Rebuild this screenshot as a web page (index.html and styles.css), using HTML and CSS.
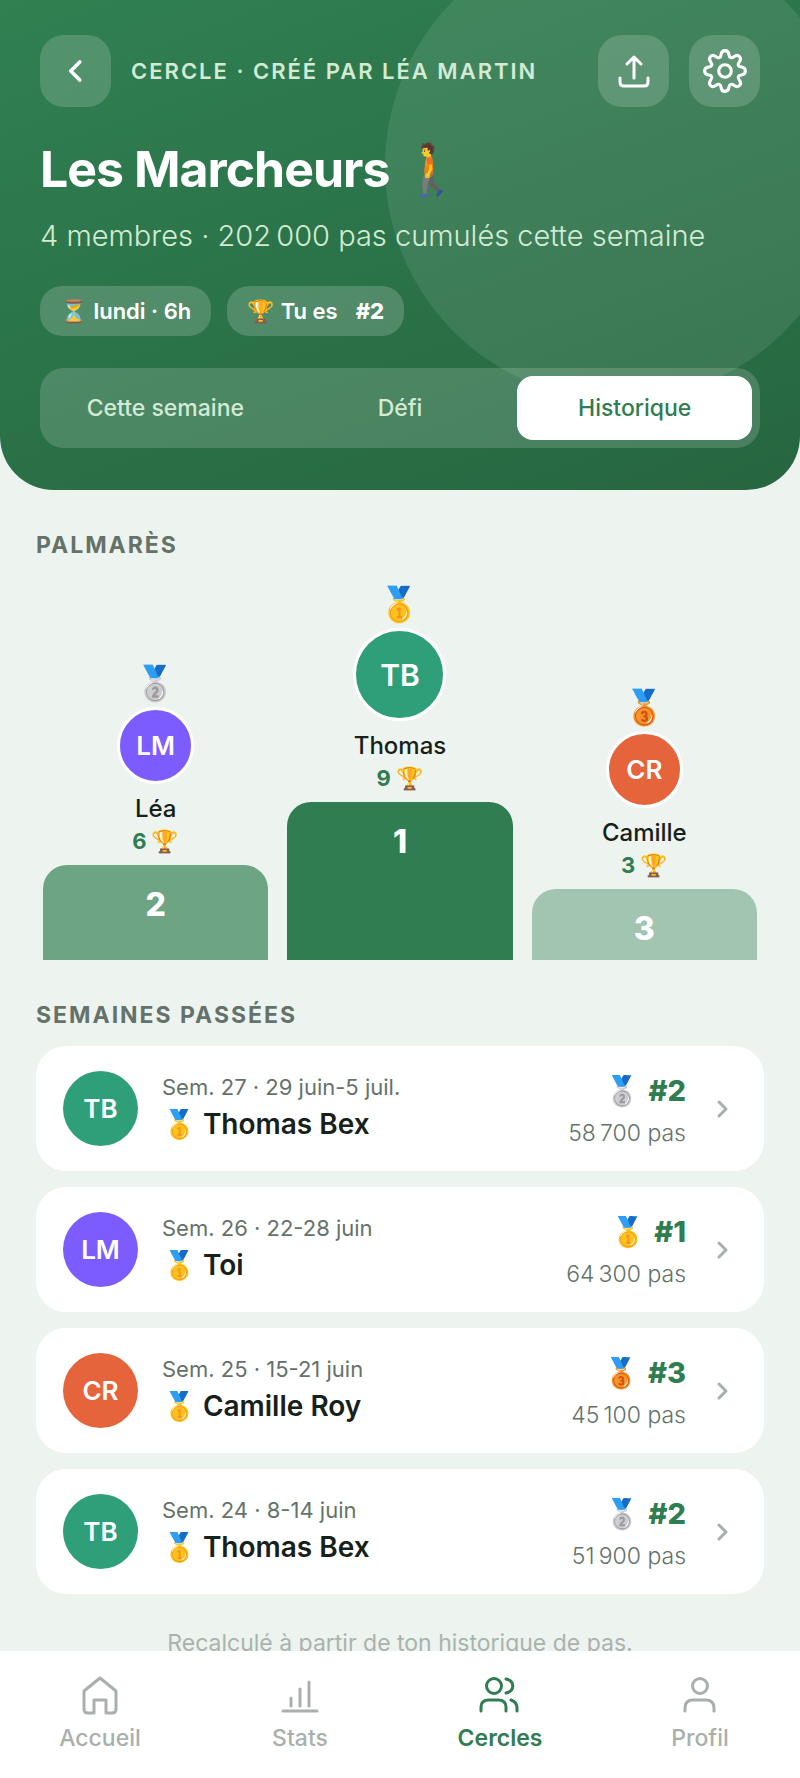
FILE: index.html
```
<!DOCTYPE html>
<html lang="fr">
<head>
    <meta charset="UTF-8">
    <meta name="viewport" content="width=device-width, initial-scale=1.0">
    <title>Les Marcheurs - Historique</title>
    <link rel="stylesheet" href="styles.css">
</head>
<body>
<div class="app">

    <!-- En-tête -->
    <header class="hero">
        <div class="topbar">
            <button class="icon-btn" aria-label="Retour">
                <svg width="36" height="36" viewBox="0 0 24 24"><path d="M14.5 6 L8.5 12 L14.5 18" stroke-width="2.4"/></svg>
            </button>
            <span class="overline">CERCLE · CRÉÉ PAR LÉA MARTIN</span>
            <button class="icon-btn" aria-label="Partager">
                <svg width="40" height="40" viewBox="0 0 40 40" stroke-width="3"><path d="M20 27 V7 M13 13 L20 6 L27 13 M6 27 V31 Q6 35 10 35 H30 Q34 35 34 31 V27"/></svg>
            </button>
            <button class="icon-btn" aria-label="Réglages">
                <svg width="46" height="46" viewBox="0 0 44 44" stroke-width="3"><circle cx="22" cy="22" r="6"/><path d="M18.2 6.5 C18.8 1.2 25.2 1.2 25.8 6.5 C26.1 9.4 28.2 10.2 30.5 8.4 C34.8 5.2 38.8 9.2 35.6 13.5 C33.8 15.8 34.6 17.9 37.5 18.2 C42.8 18.8 42.8 25.2 37.5 25.8 C34.6 26.1 33.8 28.2 35.6 30.5 C38.8 34.8 34.8 38.8 30.5 35.6 C28.2 33.8 26.1 34.6 25.8 37.5 C25.2 42.8 18.8 42.8 18.2 37.5 C17.9 34.6 15.8 33.8 13.5 35.6 C9.2 38.8 5.2 34.8 8.4 30.5 C10.2 28.2 9.4 26.1 6.5 25.8 C1.2 25.2 1.2 18.8 6.5 18.2 C9.4 17.9 10.2 15.8 8.4 13.5 C5.2 9.2 9.2 5.2 13.5 8.4 C15.8 10.2 17.9 9.4 18.2 6.5 Z"/></svg>
            </button>
        </div>

        <h1>Les Marcheurs <span class="walker">🚶</span></h1>
        <p class="subtitle">4 membres · 202&#8239;000 pas cumulés cette semaine</p>

        <div class="chips">
            <span class="chip"><span class="emoji">⏳</span>lundi · 6h</span>
            <span class="chip"><span class="emoji">🏆</span>Tu es <b>#2</b></span>
        </div>

        <div class="tabs">
            <button class="tab">Cette semaine</button>
            <button class="tab">Défi</button>
            <button class="tab active">Historique</button>
        </div>
    </header>

    <main>
        <!-- Podium -->
        <h2>PALMARÈS</h2>
        <div class="podium">
            <div class="place second">
                <span class="medal">🥈</span>
                <span class="avatar violet">LM</span>
                <span class="name">Léa</span>
                <span class="wins">6 <span>🏆</span></span>
                <div class="step">2</div>
            </div>
            <div class="place first">
                <span class="medal">🥇</span>
                <span class="avatar green">TB</span>
                <span class="name">Thomas</span>
                <span class="wins">9 <span>🏆</span></span>
                <div class="step">1</div>
            </div>
            <div class="place third">
                <span class="medal">🥉</span>
                <span class="avatar orange">CR</span>
                <span class="name">Camille</span>
                <span class="wins">3 <span>🏆</span></span>
                <div class="step">3</div>
            </div>
        </div>

        <!-- Historique -->
        <h2>SEMAINES PASSÉES</h2>
        <div class="weeks">
            <a class="week" href="#">
                <span class="avatar green">TB</span>
                <span class="info">
                    <span class="date">Sem. 27 · 29 juin-5 juil.</span>
                    <span class="winner"><span class="emoji">🥇</span>Thomas Bex</span>
                </span>
                <span class="result">
                    <span class="rank"><span class="emoji">🥈</span>#2</span>
                    <span class="steps">58&#8239;700 pas</span>
                </span>
                <svg class="chevron" width="14" height="22" viewBox="0 0 14 22"><path d="M3 4 L10 11 L3 18"/></svg>
            </a>
            <a class="week" href="#">
                <span class="avatar violet">LM</span>
                <span class="info">
                    <span class="date">Sem. 26 · 22-28 juin</span>
                    <span class="winner"><span class="emoji">🥇</span>Toi</span>
                </span>
                <span class="result">
                    <span class="rank"><span class="emoji">🥇</span>#1</span>
                    <span class="steps">64&#8239;300 pas</span>
                </span>
                <svg class="chevron" width="14" height="22" viewBox="0 0 14 22"><path d="M3 4 L10 11 L3 18"/></svg>
            </a>
            <a class="week" href="#">
                <span class="avatar orange">CR</span>
                <span class="info">
                    <span class="date">Sem. 25 · 15-21 juin</span>
                    <span class="winner"><span class="emoji">🥇</span>Camille Roy</span>
                </span>
                <span class="result">
                    <span class="rank"><span class="emoji">🥉</span>#3</span>
                    <span class="steps">45&#8239;100 pas</span>
                </span>
                <svg class="chevron" width="14" height="22" viewBox="0 0 14 22"><path d="M3 4 L10 11 L3 18"/></svg>
            </a>
            <a class="week" href="#">
                <span class="avatar green">TB</span>
                <span class="info">
                    <span class="date">Sem. 24 · 8-14 juin</span>
                    <span class="winner"><span class="emoji">🥇</span>Thomas Bex</span>
                </span>
                <span class="result">
                    <span class="rank"><span class="emoji">🥈</span>#2</span>
                    <span class="steps">51&#8239;900 pas</span>
                </span>
                <svg class="chevron" width="14" height="22" viewBox="0 0 14 22"><path d="M3 4 L10 11 L3 18"/></svg>
            </a>
        </div>
        <p class="note">Recalculé à partir de ton historique de pas.</p>
    </main>

    <!-- Barre de navigation -->
    <nav>
        <a href="#">
            <svg width="44" height="44" viewBox="0 0 44 44"><path d="M22 5 L38 18 V36 Q38 40 34 40 H28 V27 H16 V40 H10 Q6 40 6 36 V18 Z"/></svg>
            Accueil
        </a>
        <a href="#">
            <svg width="44" height="44" viewBox="0 0 44 44"><path d="M5 38 H39 M13 33 V25 M22 33 V16 M31 33 V9"/></svg>
            Stats
        </a>
        <a class="active" href="#">
            <svg width="44" height="44" viewBox="0 0 44 44"><circle cx="16" cy="13" r="7.5"/><path d="M3 38 V34 Q3 27 11 27 H20 Q28 27 28 34 V38 M28 6 C37 8 37 18 28 20 M33 27 Q39 29 39 35 V38"/></svg>
            Cercles
        </a>
        <a href="#">
            <svg width="44" height="44" viewBox="0 0 44 44"><circle cx="22" cy="13" r="7.5"/><path d="M7 38 V35 Q7 27 15 27 H28 Q36 27 36 35 V38"/></svg>
            Profil
        </a>
    </nav>

</div>
</body>
</html>
```
FILE: styles.css
```
* { margin: 0; padding: 0; box-sizing: border-box; }

body {
    font-family: Inter, "Noto Color Emoji", sans-serif;
    background: #edf4ef;
    color: #17211b;
}

button { font-family: inherit; border: none; cursor: pointer; }
a { color: inherit; text-decoration: none; }
svg { fill: none; stroke: currentColor; stroke-linecap: round; stroke-linejoin: round; }

.app {
    height: 100vh;
    display: flex;
    flex-direction: column;
}

/* En-tête */
.hero {
    position: relative;
    overflow: hidden;
    flex-shrink: 0;
    padding: 35px 40px 42px;
    border-radius: 0 0 54px 54px;
    background: linear-gradient(160deg, #308052, #266640);
    color: white;
}

.hero::before {
    content: '';
    position: absolute;
    top: -68px;
    right: -53px;
    width: 468px;
    height: 468px;
    border-radius: 50%;
    background: rgba(255, 255, 255, 0.09);
}

.hero > * { position: relative; }

.topbar {
    display: flex;
    align-items: center;
    gap: 20px;
}

.icon-btn {
    width: 71px;
    height: 72px;
    flex-shrink: 0;
    display: flex;
    align-items: center;
    justify-content: center;
    border-radius: 24px;
    background: rgba(255, 255, 255, 0.17);
    color: white;
}

.overline {
    flex: 1;
    font-size: 22px;
    font-weight: 600;
    letter-spacing: 2px;
    white-space: nowrap;
    color: #d3ebd4;
}

h1 {
    margin-top: 32px;
    font-size: 50px;
    line-height: 60px;
    font-weight: 700;
    letter-spacing: -1px;
}

.subtitle {
    margin-top: 17px;
    font-size: 29px;
    line-height: 40px;
    font-weight: 300;
    color: #d3ebd4;
}

.chips {
    display: flex;
    gap: 16px;
    margin-top: 30px;
}

.chip {
    display: flex;
    align-items: center;
    gap: 6px;
    height: 50px;
    padding: 0 20px;
    border-radius: 22px;
    background: rgba(255, 255, 255, 0.18);
    font-size: 22px;
    font-weight: 600;
}

.chip b { margin-left: 12px; font-weight: 800; }

.tabs {
    display: flex;
    margin-top: 32px;
    padding: 8px;
    border-radius: 24px;
    background: rgba(255, 255, 255, 0.16);
}

.tab {
    flex: 1;
    height: 64px;
    border-radius: 16px;
    background: none;
    font-size: 23px;
    font-weight: 500;
    color: #d3ebd4;
}

.tab.active { background: white; color: #2f7d50; }

/* Contenu */
main {
    flex: 1;
    min-height: 0;
    overflow-y: auto;
    scrollbar-width: none;
    padding: 40px 36px 0;
}

h2 {
    font-size: 23px;
    line-height: 30px;
    font-weight: 700;
    letter-spacing: 2px;
    color: #64726a;
}

.avatar {
    display: flex;
    align-items: center;
    justify-content: center;
    flex-shrink: 0;
    width: 75px;
    height: 75px;
    border-radius: 50%;
    font-size: 26px;
    font-weight: 600;
    color: white;
}

.green { background: #2f9f7a; }
.violet { background: #7c5cff; }
.orange { background: #e6643c; }

.podium {
    display: grid;
    grid-template-columns: repeat(3, 1fr);
    align-items: end;
    gap: 19px;
    margin-top: 20px;
    padding: 0 7px;
}

.place {
    display: flex;
    flex-direction: column;
    align-items: center;
}

.medal { font-size: 34px; line-height: 48px; }

.podium .avatar {
    width: 77px;
    height: 77px;
    border: 3px solid white;
}

.podium .first .avatar {
    width: 93px;
    height: 93px;
    font-size: 30px;
}

.name {
    margin-top: 10px;
    font-size: 24px;
    line-height: 30px;
    font-weight: 500;
}

.wins {
    line-height: 34px;
    font-size: 22px;
    font-weight: 700;
    color: #2f7d50;
}

.step {
    align-self: stretch;
    margin-top: 7px;
    padding-top: 20px;
    border-radius: 24px 24px 0 0;
    text-align: center;
    font-size: 32px;
    line-height: 40px;
    font-weight: 800;
    color: white;
}

.first .step { height: 158px; background: #2f7d50; }
.second .step { height: 95px; background: #6da584; }
.third .step { height: 71px; background: #a1c5b0; }

.podium + h2 { margin-top: 40px; }

.weeks {
    display: flex;
    flex-direction: column;
    gap: 16px;
    margin-top: 16px;
}

.week {
    display: flex;
    align-items: center;
    height: 125px;
    padding: 0 34px 0 27px;
    border-radius: 30px;
    background: white;
}

.info {
    flex: 1;
    display: flex;
    flex-direction: column;
    margin-left: 24px;
    padding-bottom: 6px;
}

.date {
    font-size: 22px;
    line-height: 36px;
    color: #64726a;
}

.winner {
    display: flex;
    align-items: center;
    gap: 6px;
    font-size: 28px;
    line-height: 38px;
    font-weight: 600;
}

.emoji { font-weight: 400; }

.result {
    display: flex;
    flex-direction: column;
    align-items: flex-end;
    gap: 6px;
    padding-top: 4px;
}

.rank {
    display: flex;
    align-items: center;
    gap: 8px;
    font-size: 29px;
    line-height: 38px;
    font-weight: 800;
    color: #2f7d50;
}

.steps {
    font-size: 23px;
    line-height: 34px;
    font-weight: 300;
    color: #64726a;
}

.chevron {
    margin-left: 30px;
    color: #a9b0ac;
    stroke-width: 3;
}

.note {
    margin-top: 34px;
    text-align: center;
    font-size: 23px;
    line-height: 30px;
    color: #a9b3ad;
}

/* Navigation */
nav {
    display: flex;
    flex-shrink: 0;
    height: 127px;
    padding-top: 22px;
    background: white;
}

nav a {
    flex: 1;
    display: flex;
    flex-direction: column;
    align-items: center;
    gap: 6px;
    font-size: 23px;
    line-height: 30px;
    font-weight: 500;
    color: #a9b0ac;
}

nav svg { stroke-width: 3; }

nav a.active { color: #2f7d50; font-weight: 600; }
```
